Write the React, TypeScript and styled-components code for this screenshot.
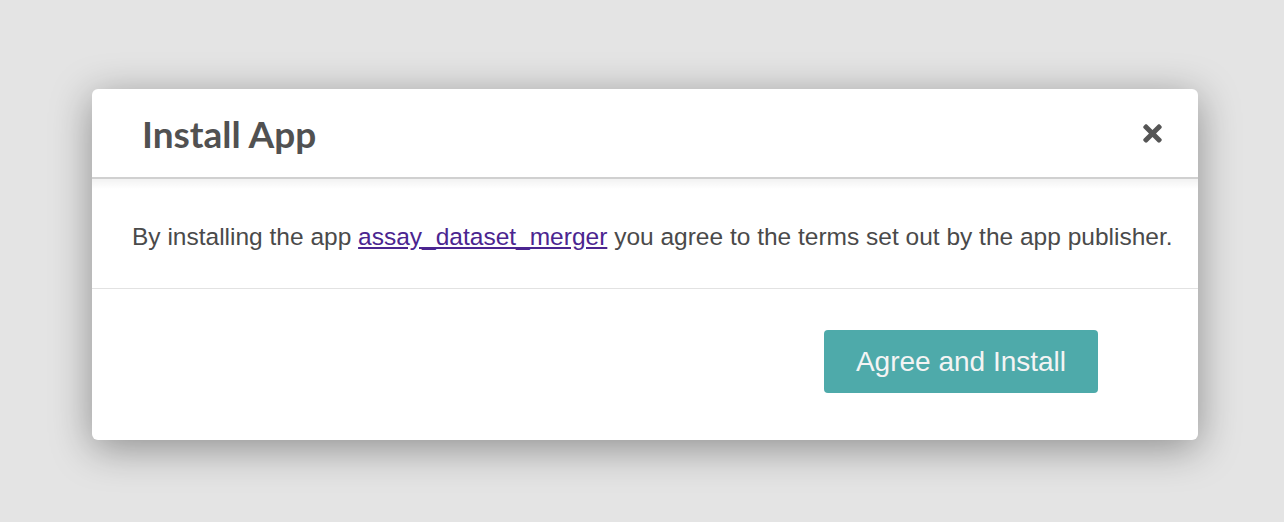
import { FC } from "react";
import styled, { createGlobalStyle } from "styled-components";
import { FaTimes } from "react-icons/fa";

const GlobalStyle = createGlobalStyle`
  html, body {
    margin: 0;
    padding: 0;
    background: #e4e4e4;
  }
  body {
    font-family: "Liberation Sans", Arial, sans-serif;
  }
`;

const Page = styled.div`
  width: 1284px;
  height: 522px;
  padding: 89px 0 0 92px;
  box-sizing: border-box;
`;

const Modal = {
  Container: styled.div`
    width: 1106px;
    height: 351px;
    background: #fff;
    border-radius: 6px;
    box-shadow: 0 8px 40px rgba(0, 0, 0, 0.38);
    display: flex;
    flex-direction: column;
    overflow: hidden;
  `,

  Header: styled.div`
    position: relative;
    height: 88px;
    display: flex;
    align-items: center;
    justify-content: space-between;
    padding: 0 32px 0 50px;
    border-bottom: 2px solid #d0d0d0;
    &::after {
      content: "";
      position: absolute;
      left: 0;
      right: 0;
      top: 90px;
      height: 10px;
      background: linear-gradient(rgba(0, 0, 0, 0.05), rgba(0, 0, 0, 0));
    }
  `,

  Title: styled.h1`
    margin: 0;
    font-family: Lato, "Noto Sans", sans-serif;
    font-size: 37px;
    font-weight: 700;
    color: #515151;
  `,

  Close: styled.button`
    border: 0;
    background: none;
    padding: 0;
    color: #555;
    display: flex;
    cursor: pointer;
  `,

  Body: styled.div`
    height: 110px;
    display: flex;
    align-items: center;
    padding: 0 40px;
    border-bottom: 1px solid #e2e2e2;
    box-sizing: border-box;
  `,

  Text: styled.p`
    margin: 6px 0 0;
    font-size: 24.5px;
    color: #4a4a4a;
    white-space: nowrap;
  `,

  Link: styled.a`
    color: #4b2590;
    text-decoration: underline;
  `,

  Footer: styled.div`
    flex: 1;
    display: flex;
    align-items: center;
    justify-content: flex-end;
    padding: 0 100px 6px 0;
  `,

  Button: styled.button`
    width: 274px;
    height: 63px;
    border: 0;
    border-radius: 4px;
    background: #4eaaaa;
    color: #f4f4f4;
    font-family: "Liberation Sans", Arial, sans-serif;
    font-size: 28px;
    cursor: pointer;
  `,
};

const App: FC = () => {
  return (
    <Page>
      <GlobalStyle />
      <Modal.Container>
        <Modal.Header>
          <Modal.Title>Install App</Modal.Title>
          <Modal.Close aria-label="Close">
            <FaTimes size={27} />
          </Modal.Close>
        </Modal.Header>
        <Modal.Body>
          <Modal.Text>
            By installing the app{" "}
            <Modal.Link href="#">assay_dataset_merger</Modal.Link> you agree to
            the terms set out by the app publisher.
          </Modal.Text>
        </Modal.Body>
        <Modal.Footer>
          <Modal.Button>Agree and Install</Modal.Button>
        </Modal.Footer>
      </Modal.Container>
    </Page>
  );
};

export default App;
